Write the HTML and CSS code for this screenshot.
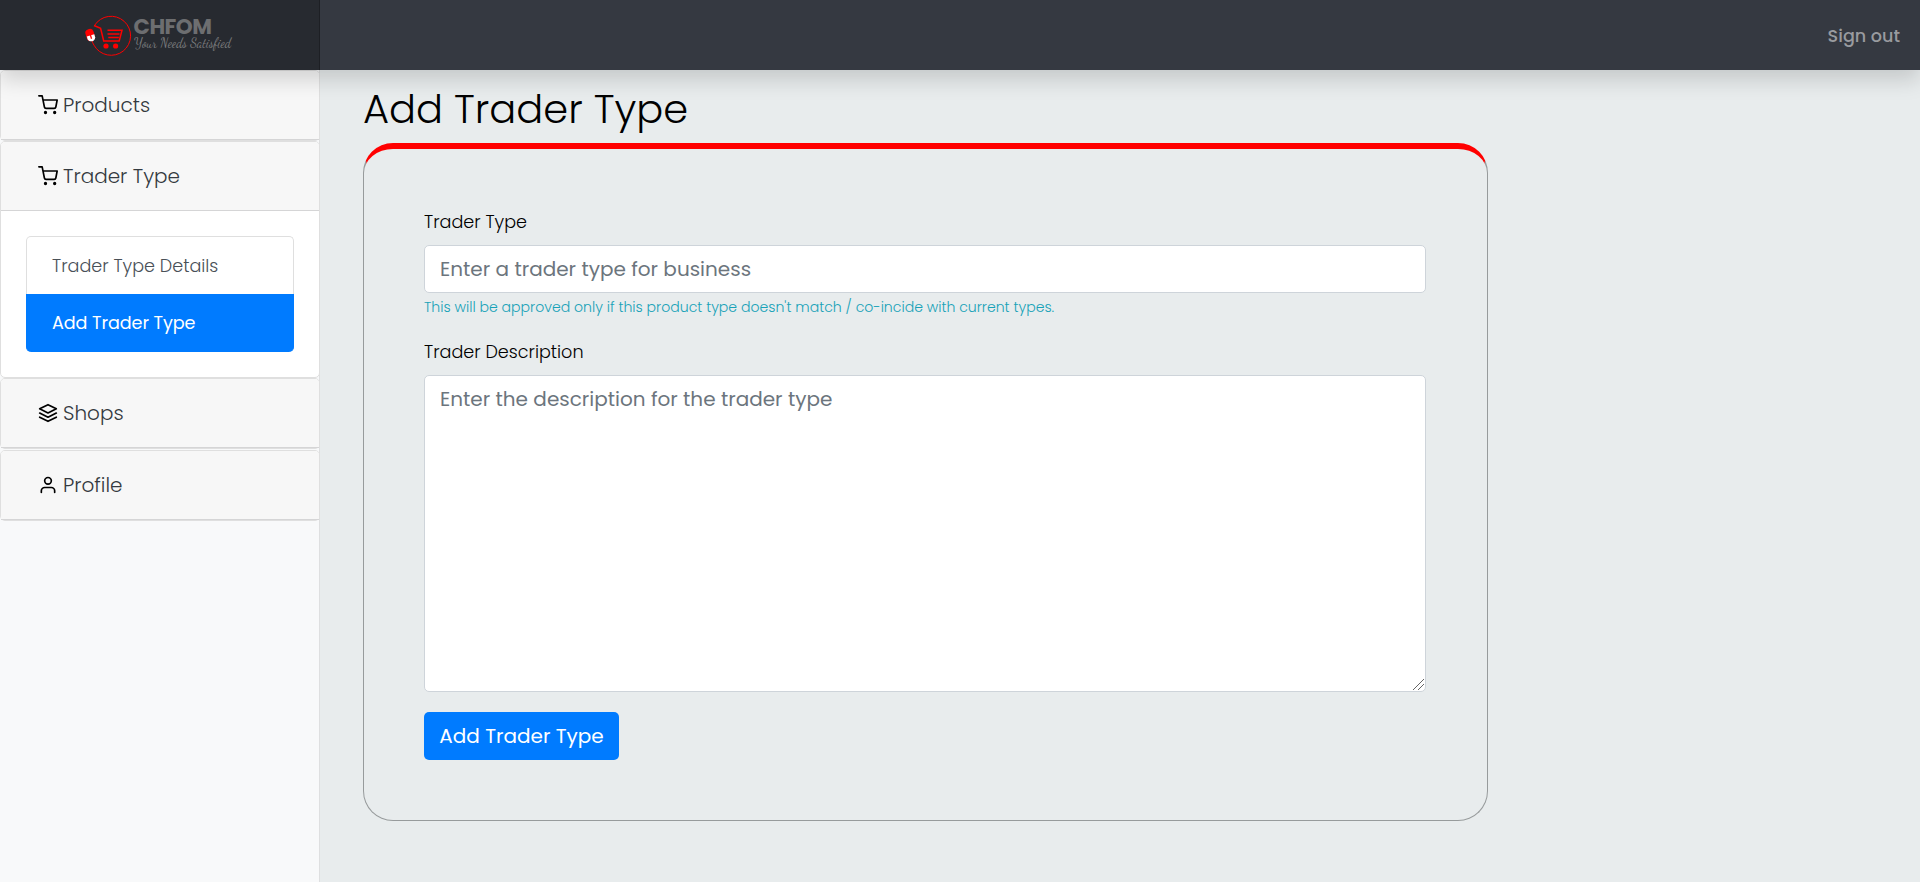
FILE: index.html
```html
<!DOCTYPE html>
<html lang="en">
<head>
<meta charset="utf-8">
<title>Add Trader Type</title>
<link rel="stylesheet" href="styles.css">
</head>
<body>
<svg class="defs" aria-hidden="true">
  <symbol id="cart" viewBox="0 0 24 24"><circle cx="9" cy="21" r="1"/><circle cx="20" cy="21" r="1"/><path d="M1 1h4l2.68 13.39a2 2 0 0 0 2 1.61h9.72a2 2 0 0 0 2-1.61L23 6H6"/></symbol>
  <symbol id="layers" viewBox="0 0 24 24"><polygon points="12 2 2 7 12 12 22 7 12 2"/><polyline points="2 17 12 22 22 17"/><polyline points="2 12 12 17 22 12"/></symbol>
  <symbol id="user" viewBox="0 0 24 24"><path d="M20 21v-2a4 4 0 0 0-4-4H8a4 4 0 0 0-4 4v2"/><circle cx="12" cy="7" r="4"/></symbol>
</svg>
<header class="navbar">
  <a class="brand">
    <svg class="logo" width="156" height="50" viewBox="80 10 156 50">
      <g fill="none" stroke="#f00" stroke-width="1">
        <path d="M94.5 25.500A19.500 19.500 0 1 1 94 45.200Q92.500 43 92 40.500"/>
        <path stroke-width="1.500" d="M94 25.500l6.600 2.900 3.100 12.600h15.500l2.800-10.700h-14.500M107.500 34h12M108.300 37.400h10.500"/>
      </g>
      <circle cx="106" cy="46" r="2.600" fill="#f00"/>
      <circle cx="115.600" cy="46" r="2.600" fill="#f00"/>
      <g transform="rotate(-17 90.200 35)">
        <rect x="86" y="29" width="8.400" height="12" rx="3.600" fill="#f00"/>
        <path d="M86.500 35.500h7.800v3q-1 3-3.900 3t-3.900-3z" fill="#fff"/>
        <path d="M90.400 35v4" stroke="#f00" stroke-width="1.300"/>
      </g>
      <text class="logo-name" x="133.500" y="34" textLength="78.500">CHFOM</text>
      <text class="logo-tag" x="134" y="47" textLength="97" lengthAdjust="spacingAndGlyphs">Your Needs Satisfied</text>
    </svg>
  </a>
  <a class="signout">Sign out</a>
</header>
<div class="layout">
  <nav class="sidebar">
    <section class="card"><div class="card-header"><svg class="icon"><use href="#cart"/></svg><span>Products</span></div></section>
    <section class="card">
      <div class="card-header"><svg class="icon"><use href="#cart"/></svg><span>Trader Type</span></div>
      <div class="card-body">
        <ul class="list">
          <li class="item">Trader Type Details</li>
          <li class="item active">Add Trader Type</li>
        </ul>
      </div>
    </section>
    <section class="card"><div class="card-header"><svg class="icon"><use href="#layers"/></svg><span>Shops</span></div></section>
    <section class="card last"><div class="card-header"><svg class="icon"><use href="#user"/></svg><span>Profile</span></div></section>
  </nav>
  <main class="main">
    <h1 class="title">Add Trader Type</h1>
    <form class="panel">
      <label class="label" for="type">Trader Type</label>
      <input class="control" id="type" placeholder="Enter a trader type for business">
      <small class="help">This will be approved only if this product type doesn't match / co-incide with current types.</small>
      <label class="label" for="desc">Trader Description</label>
      <textarea class="control area" id="desc" placeholder="Enter the description for the trader type"></textarea>
      <button class="button" type="button">Add Trader Type</button>
    </form>
  </main>
</div>
</body>
</html>
```

FILE: styles.css
```css
*, *::before, *::after { box-sizing: border-box; }

body {
  margin: 0;
  height: 882px;
  overflow: hidden;
  display: flex;
  flex-direction: column;
  background: #e8eced;
  color: #000;
  font-family: Poppins, Inter, sans-serif;
  font-size: 17.6px;
  font-weight: 300;
}

.defs { display: none; }

.navbar {
  position: relative;
  z-index: 1;
  flex: none;
  height: 70px;
  display: flex;
  justify-content: space-between;
  align-items: center;
  background: #353941;
  box-shadow: 0 10px 20px rgba(0, 0, 0, .15);
}

.brand {
  width: 320px;
  height: 70px;
  padding: 10px 0 0 80px;
  background: rgba(0, 0, 0, .25);
  box-shadow: inset -1px 0 0 rgba(0, 0, 0, .25);
}

.logo {
  display: block;
  overflow: visible;
}

.logo-name {
  font: 700 21.5px Poppins, Inter, sans-serif;
  fill: #6d6e70;
}

.logo-tag {
  font: 400 15px "Dancing Script", "Great Vibes", "Liberation Serif", cursive;
  fill: #7c7d7f;
}

.signout {
  padding: 1px 20px 0 0;
  color: #999b9f;
  font-weight: 500;
}

.layout {
  flex: 1;
  display: flex;
}

.sidebar {
  width: 320px;
  flex: none;
  background: #f8f9fa;
  box-shadow: inset -1px 0 0 rgba(0, 0, 0, .1);
}

.card {
  background: #fff;
  border: 1px solid #dfdfdf;
  border-radius: 5px;
}

.last { margin-top: 1px; }

.card-header {
  height: 69px;
  padding: 0 0 0 37px;
  display: flex;
  align-items: center;
  gap: 5px;
  background: #f7f7f7;
  border-bottom: 1px solid #d5d5d6;
  border-radius: 4px 4px 0 0;
  color: #343a40;
  font-size: 20px;
}

.icon {
  width: 20px;
  height: 20px;
  fill: none;
  stroke: #000;
  stroke-width: 2;
  stroke-linecap: round;
  stroke-linejoin: round;
}

.card-body { padding: 25px; }

.list {
  margin: 0;
  padding: 0;
  list-style: none;
}

.item {
  height: 58px;
  padding-left: 25px;
  border: 1px solid #dfdfdf;
  border-bottom: 0;
  border-radius: 5px 5px 0 0;
  color: #495057;
  line-height: 58px;
}

.active {
  border-color: #007bff;
  border-radius: 0 0 5px 5px;
  background: #007bff;
  color: #fff;
  font-weight: 400;
  line-height: 56px;
  letter-spacing: -.08px;
}

.main { padding: 15px 0 0 43px; }

.title {
  margin: 0 0 10px;
  font-size: 40px;
  font-weight: 300;
  line-height: 48px;
}

.panel {
  width: 1125px;
  padding: 60px 61px 60px 60px;
  border: 1px solid #979b9c;
  border-top: 6px solid #f00;
  border-radius: 30px;
  display: flex;
  flex-direction: column;
  align-items: flex-start;
}

.label {
  margin-bottom: 10px;
  line-height: 26px;
}

.control {
  width: 100%;
  height: 48px;
  padding: 8px 15px;
  border: 1px solid #ced4da;
  border-radius: 5px;
  background: #fff;
  font: 400 20px/30px Poppins, Inter, sans-serif;
}

.control::placeholder {
  color: #6c757d;
  opacity: 1;
}

.help {
  margin: 5px 0 23px;
  color: #17a2b8;
  font-size: 14.08px;
  line-height: 18px;
}

.area { height: 317px; }

.area::-webkit-resizer {
  background: linear-gradient(135deg, transparent 7.3px, #666 7.4px 8.1px, transparent 8.2px 10.8px, #666 10.9px 11.6px, transparent 11.7px) 3px 3px / 11px 11px no-repeat;
}

.button {
  height: 48px;
  margin-top: 20px;
  width: 195px;
  padding: 0;
  border: 0;
  border-radius: 5px;
  background: #007bff;
  color: #fff;
  font: 400 20px Poppins, Inter, sans-serif;
}
```
